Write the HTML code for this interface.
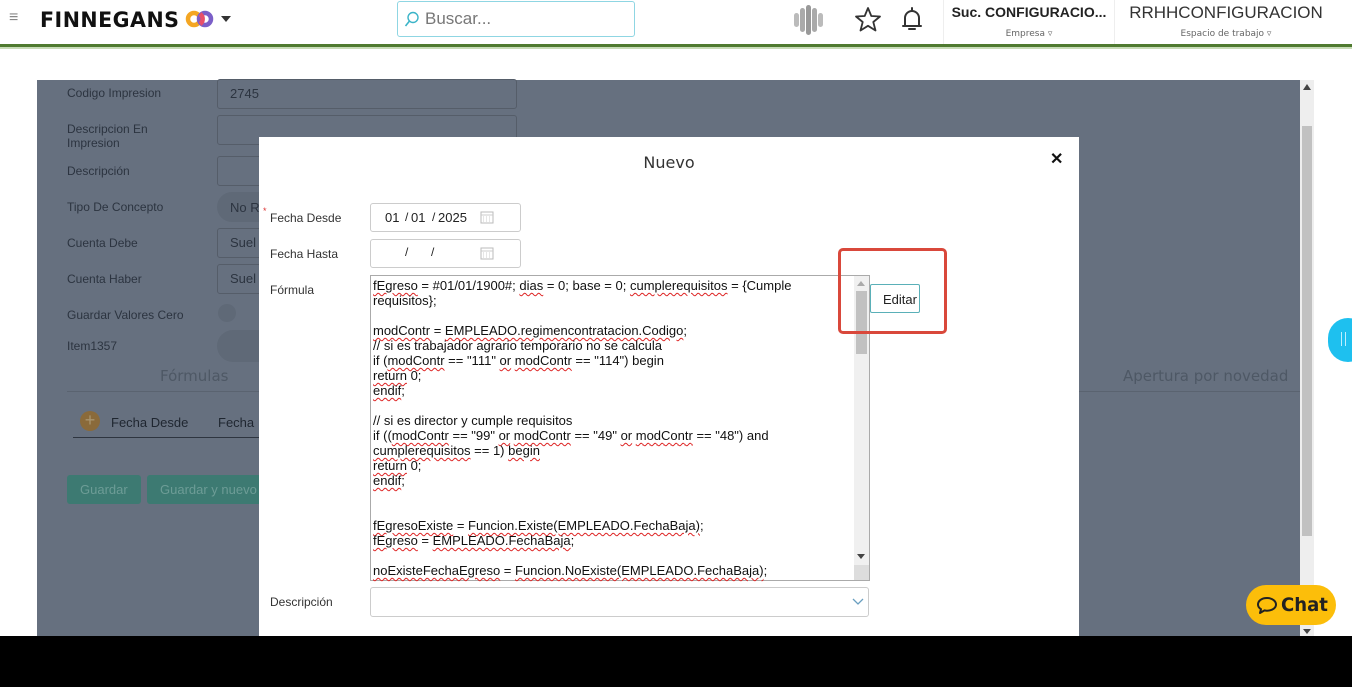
<!DOCTYPE html>
<html><head><meta charset="utf-8"><style>
*{box-sizing:border-box;margin:0;padding:0}
body{width:1352px;height:687px;overflow:hidden;background:#fff;font-family:"Liberation Sans",Arial,sans-serif;position:relative}
.a{position:absolute}
.lbl{position:absolute;left:67px;font-size:12px;color:#2c3440}
.inp{position:absolute;left:217px;width:300px;height:30px;border:1px solid #555d69;border-radius:3px;font-size:13px;color:#2c3440;padding:6px 12px}
.code{position:absolute;left:373px;top:278px;width:480px;font-size:13px;line-height:15px;color:#111;white-space:pre}
.w{text-decoration:underline wavy #d22;text-decoration-thickness:1px;text-underline-offset:2px}
</style></head><body>
<!-- header -->
<div class="a" style="left:9px;top:9px;font-size:16px;color:#888">&#8801;</div>
<div class="a" style="left:40px;top:8px;font-size:21px;font-weight:bold;color:#111;letter-spacing:0.5px;font-family:'DejaVu Sans','Liberation Sans',sans-serif;transform:scaleX(0.98);transform-origin:left;white-space:nowrap">FINNEGANS</div>
<svg class="a" style="left:185px;top:10px" width="30" height="18"><circle cx="9" cy="9" r="6" fill="none" stroke="#f4a623" stroke-width="4.5"/><circle cx="20" cy="9" r="6" fill="none" stroke="#7b5fc8" stroke-width="4.5"/><path d="M15 4 A6 6 0 0 1 15 14" stroke="#e8506a" stroke-width="4.5" fill="none"/></svg>
<div class="a" style="left:221px;top:16px;width:0;height:0;border-left:5px solid transparent;border-right:5px solid transparent;border-top:6px solid #333"></div>
<div class="a" style="left:397px;top:1px;width:238px;height:36px;border:1px solid #8fd6e3;border-radius:3px"></div>
<svg class="a" style="left:404px;top:11px" width="16" height="18"><circle cx="9" cy="6.5" r="5" fill="none" stroke="#3bb4c8" stroke-width="1.4"/><line x1="5.5" y1="10" x2="1.5" y2="15" stroke="#3bb4c8" stroke-width="1.6"/></svg>
<div class="a" style="left:425px;top:9px;font-size:17px;color:#777">Buscar...</div>
<svg class="a" style="left:792px;top:4px" width="34" height="32"><g fill="#bbb"><rect x="2" y="9" width="5" height="14" rx="2.5"/><rect x="8" y="4" width="5" height="24" rx="2.5" fill="#aaa"/><rect x="14" y="1" width="5" height="30" rx="2.5" fill="#999"/><rect x="20" y="4" width="5" height="24" rx="2.5" fill="#aaa"/><rect x="26" y="9" width="5" height="14" rx="2.5"/></g></svg>
<svg class="a" style="left:854px;top:6px" width="28" height="26"><polygon points="14,2 17.3,10 26,10.5 19.3,16 21.5,24.5 14,19.8 6.5,24.5 8.7,16 2,10.5 10.7,10" fill="none" stroke="#333" stroke-width="1.8" stroke-linejoin="round"/></svg>
<svg class="a" style="left:900px;top:5px" width="24" height="28"><path d="M12 3 V5 M5 21 V13 A7 7 0 0 1 19 13 V21 M3 21 H21 M9 24 H15" fill="none" stroke="#333" stroke-width="2" stroke-linecap="round"/></svg>
<div class="a" style="left:943px;top:0;width:1px;height:44px;background:#eee"></div>
<div class="a" style="left:1114px;top:0;width:1px;height:44px;background:#eee"></div>
<div class="a" style="left:944px;top:4px;width:170px;text-align:center;font-size:14px;font-weight:bold;color:#222;white-space:nowrap">Suc. CONFIGURACIO...</div>
<div class="a" style="left:944px;top:29px;width:170px;text-align:center;font-size:9px;color:#666;font-family:'DejaVu Sans',sans-serif">Empresa &#9663;</div>
<div class="a" style="left:1115px;top:3px;width:222px;text-align:center;font-size:17px;color:#333;white-space:nowrap">RRHHCONFIGURACION</div>
<div class="a" style="left:1115px;top:29px;width:222px;text-align:center;font-size:9px;color:#666;font-family:'DejaVu Sans',sans-serif">Espacio de trabajo &#9663;</div>
<div class="a" style="left:0;top:44px;width:1352px;height:3px;background:#4f7a30"></div>
<div class="a" style="left:0;top:47px;width:1352px;height:2px;background:#c8dcb8"></div>

<!-- backdrop -->
<div class="a" style="left:37px;top:80px;width:1263px;height:556px;background:#66707f"></div>
<div class="a" style="left:1300px;top:80px;width:14px;height:556px;background:#eee"></div>
<div class="a" style="left:1302px;top:126px;width:10px;height:410px;background:#c1c1c1"></div>
<div class="a" style="left:1303px;top:84px;border-left:4px solid transparent;border-right:4px solid transparent;border-bottom:6px solid #444"></div>
<div class="a" style="left:1303px;top:629px;border-left:4px solid transparent;border-right:4px solid transparent;border-top:5px solid #444"></div>

<div class="lbl" style="top:86px">Codigo Impresion</div>
<div class="inp" style="top:79px">2745</div>
<div class="lbl" style="top:122px;line-height:14px">Descripcion En<br>Impresion</div>
<div class="inp" style="top:115px"></div>
<div class="lbl" style="top:164px">Descripción</div>
<div class="inp" style="top:156px"></div>
<div class="lbl" style="top:200px">Tipo De Concepto</div>
<div class="a" style="left:217px;top:192px;width:60px;height:30px;background:#5f6977;border-radius:15px;font-size:13px;color:#2c3440;padding:8px 13px">No R</div>
<div class="lbl" style="top:236px">Cuenta Debe</div>
<div class="inp" style="top:228px">Suel</div>
<div class="lbl" style="top:272px">Cuenta Haber</div>
<div class="inp" style="top:264px">Suel</div>
<div class="lbl" style="top:308px">Guardar Valores Cero</div>
<div class="a" style="left:218px;top:304px;width:18px;height:18px;border-radius:50%;background:#5f6977"></div>
<div class="lbl" style="top:339px">Item1357</div>
<div class="a" style="left:217px;top:330px;width:60px;height:32px;background:#5f6977;border-radius:16px"></div>
<div class="a" style="left:160px;top:367px;font-size:15px;color:#4e5865;font-family:'DejaVu Sans',sans-serif">Fórmulas</div>
<div class="a" style="left:1123px;top:367px;font-size:15px;color:#4e5865;font-family:'DejaVu Sans',sans-serif">Apertura por novedad</div>
<div class="a" style="left:67px;top:391px;width:1233px;height:1px;background:#5a6370"></div>
<div class="a" style="left:80px;top:411px;width:20px;height:20px;border-radius:50%;background:#8a6a3a;color:#a8946f;font-size:18px;line-height:19px;text-align:center">+</div>
<div class="a" style="left:111px;top:415px;font-size:13px;color:#1f2630">Fecha Desde</div>
<div class="a" style="left:218px;top:415px;font-size:13px;color:#1f2630">Fecha</div>
<div class="a" style="left:73px;top:437px;width:190px;height:1px;background:#2e3540"></div>
<div class="a" style="left:67px;top:475px;width:74px;height:29px;background:#3d7a72;border-radius:3px;font-size:13px;color:#6d9c96;padding:7px 13px">Guardar</div>
<div class="a" style="left:147px;top:475px;width:120px;height:29px;background:#3d7a72;border-radius:3px;font-size:13px;color:#6d9c96;padding:7px 13px;white-space:nowrap;overflow:hidden">Guardar y nuevo</div>

<!-- modal -->
<div class="a" style="left:259px;top:137px;width:820px;height:499px;background:#fff"></div>
<div class="a" style="left:259px;top:153px;width:820px;text-align:center;font-size:16px;color:#333;font-family:'DejaVu Sans',sans-serif">Nuevo</div>
<div class="a" style="left:1050px;top:149px;font-size:16px;font-weight:bold;color:#111">&#10005;</div>
<div class="a" style="left:263px;top:206px;font-size:9px;color:#d33">*</div>
<div class="a" style="left:270px;top:211px;font-size:12px;color:#333">Fecha Desde</div>
<div class="a" style="left:270px;top:247px;font-size:12px;color:#333">Fecha Hasta</div>
<div class="a" style="left:370px;top:203px;width:151px;height:29px;border:1px solid #ccc;border-radius:3px"></div>
<div class="a" style="left:385px;top:210px;font-size:13px;color:#222;white-space:nowrap">01</div>
<div class="a" style="left:405px;top:210px;font-size:12px;color:#222">/</div>
<div class="a" style="left:411px;top:210px;font-size:13px;color:#222">01</div>
<div class="a" style="left:432px;top:210px;font-size:12px;color:#222">/</div>
<div class="a" style="left:438px;top:210px;font-size:13px;color:#222">2025</div>
<div class="a" style="left:370px;top:239px;width:151px;height:29px;border:1px solid #ccc;border-radius:3px"></div>
<div class="a" style="left:405px;top:245px;font-size:12px;color:#222">/</div>
<div class="a" style="left:431px;top:245px;font-size:12px;color:#222">/</div>
<svg class="a" style="left:480px;top:210px" width="14" height="14"><rect x="1" y="2" width="12" height="11" fill="none" stroke="#bbb"/><path d="M1 5H13M3 7h1M6 7h1M9 7h1M3 9h1M6 9h1M9 9h1M3 11h1M6 11h1M9 11h1" stroke="#ccc"/></svg>
<svg class="a" style="left:480px;top:246px" width="14" height="14"><rect x="1" y="2" width="12" height="11" fill="none" stroke="#bbb"/><path d="M1 5H13M3 7h1M6 7h1M9 7h1M3 9h1M6 9h1M9 9h1M3 11h1M6 11h1M9 11h1" stroke="#ccc"/></svg>
<div class="a" style="left:270px;top:283px;font-size:12px;color:#333">Fórmula</div>
<div class="a" style="left:370px;top:275px;width:500px;height:306px;border:1px solid #aaa"></div>
<div class="a" style="left:854px;top:276px;width:15px;height:304px;background:#f0f0f0"></div>
<div class="a" style="left:856px;top:291px;width:11px;height:63px;background:#c1c1c1"></div>
<div class="a" style="left:857px;top:281px;border-left:4px solid transparent;border-right:4px solid transparent;border-bottom:5px solid #aaa"></div>
<div class="a" style="left:857px;top:554px;border-left:4px solid transparent;border-right:4px solid transparent;border-top:5px solid #444"></div>
<div class="a" style="left:854px;top:565px;width:15px;height:15px;background:#ddd"></div>
<div class="code"><span class="w">fEgreso</span> = #01/01/1900#; <span class="w">dias</span> = 0; base = 0; <span class="w">cumplerequisitos</span> = {Cumple
requisitos};

<span class="w">modContr</span> = <span class="w">EMPLEADO.regimencontratacion.Codigo</span>;
// si es trabajador agrario temporario no se calcula
if (<span class="w">modContr</span> == "111" <span class="w">or</span> <span class="w">modContr</span> == "114") begin
<span class="w">return</span> 0;
<span class="w">endif</span>;

// si es director y cumple requisitos
if ((<span class="w">modContr</span> == "99" <span class="w">or</span> <span class="w">modContr</span> == "49" <span class="w">or</span> <span class="w">modContr</span> == "48") and
<span class="w">cumplerequisitos</span> == 1) <span class="w">begin</span>
<span class="w">return</span> 0;
<span class="w">endif</span>;


<span class="w">fEgresoExiste</span> = <span class="w">Funcion.Existe(EMPLEADO.FechaBaja)</span>;
<span class="w">fEgreso</span> = <span class="w">EMPLEADO.FechaBaja</span>;

<span class="w">noExisteFechaEgreso</span> = <span class="w">Funcion.NoExiste(EMPLEADO.FechaBaja)</span>;</div>
<div class="a" style="left:870px;top:284px;width:50px;height:29px;border:1px solid #5ab0b8;border-radius:2px;font-size:13px;color:#222;padding:7px 0 0 12px">Editar</div>
<div class="a" style="left:838px;top:248px;width:109px;height:86px;border:3px solid #d9483b;border-radius:5px"></div>
<div class="a" style="left:270px;top:595px;font-size:12px;color:#333">Descripción</div>
<div class="a" style="left:370px;top:587px;width:499px;height:30px;border:1px solid #ccc;border-radius:3px"></div>
<svg class="a" style="left:852px;top:598px" width="12" height="8"><path d="M1 1L6 6L11 1" fill="none" stroke="#6a9fc0" stroke-width="1.3"/></svg>

<!-- side blue tab -->
<div class="a" style="left:1328px;top:318px;width:40px;height:44px;border-radius:22px;background:#1ec0ef"></div>
<div class="a" style="left:1341px;top:332px;width:1px;height:14px;background:#bdefff"></div>
<div class="a" style="left:1345px;top:332px;width:1px;height:14px;background:#bdefff"></div>
<!-- chat -->
<div class="a" style="left:1246px;top:585px;width:90px;height:40px;border-radius:20px;background:#fcbe0a"></div>
<svg class="a" style="left:1256px;top:596px" width="22" height="20"><path d="M11 2C5.5 2 2 5 2 8.5c0 2 1.2 3.6 3 4.6L4 17l4.5-2.6c.8.2 1.6.3 2.5.3 5.5 0 9-3 9-6.2S16.5 2 11 2z" fill="none" stroke="#222" stroke-width="2" stroke-linejoin="round"/></svg>
<div class="a" style="left:1281px;top:594px;font-size:19px;font-weight:bold;color:#222;font-family:'DejaVu Sans',sans-serif;transform:scaleX(0.95);transform-origin:left">Chat</div>

<div class="a" style="left:0;top:636px;width:1352px;height:51px;background:#000"></div>
</body></html>
